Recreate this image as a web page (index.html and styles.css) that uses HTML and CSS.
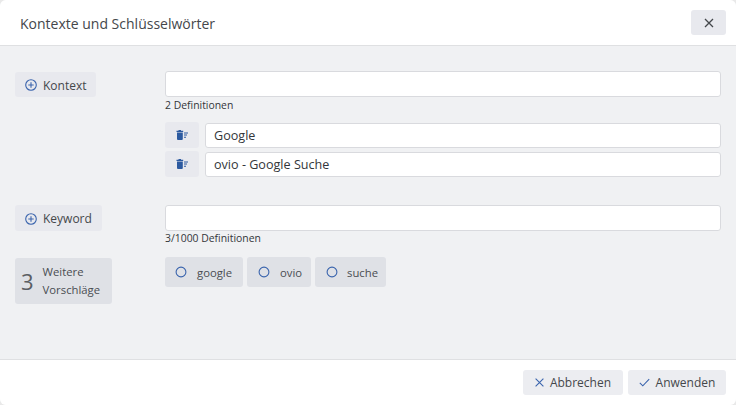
FILE: index.html
```html
<!DOCTYPE html>
<html lang="de">
<head>
<meta charset="utf-8">
<title>Kontexte und Schlüsselwörter</title>
<link rel="stylesheet" href="styles.css">
</head>
<body>
<div class="dialog">
  <header class="head">
    <h1 class="title">Kontexte und Schlüsselwörter</h1>
    <button class="btn close" aria-label="Schließen"><svg width="10" height="10" viewBox="0 0 10 10"><path d="M1 1l8 8M9 1l-8 8" class="st-dark"/></svg></button>
  </header>
  <main class="body">
    <section class="row row-context">
      <div class="left"><button class="btn add add-kontext"><svg width="12" height="12" viewBox="0 0 12 12"><circle cx="6" cy="6" r="5.300" class="st-blue"/><path d="M6 3.300v5.400M3.300 6h5.400" class="st-blue"/></svg>Kontext</button></div>
      <div class="right">
        <input class="field" type="text">
        <div class="hint">2 Definitionen</div>
        <div class="items">
          <div class="item">
            <button class="btn icon" aria-label="Löschen"><svg width="12" height="10" viewBox="0 0 12 10"><path d="M2.500 0h2.500v.8h2.200v1.200H.5V.8h2zM1 2.600h5.800v6.400q0 1-1 1H2q-1 0-1-1zM8 2.500h4v1H8zM8 4.600h3v1H8zM8 6.700h2v1H8z" class="fill-blue"/></svg></button>
            <input class="field small" type="text" value="Google">
          </div>
          <div class="item">
            <button class="btn icon" aria-label="Löschen"><svg width="12" height="10" viewBox="0 0 12 10"><path d="M2.500 0h2.500v.8h2.200v1.200H.5V.8h2zM1 2.600h5.800v6.400q0 1-1 1H2q-1 0-1-1zM8 2.500h4v1H8zM8 4.600h3v1H8zM8 6.700h2v1H8z" class="fill-blue"/></svg></button>
            <input class="field small" type="text" value="ovio - Google Suche">
          </div>
        </div>
      </div>
    </section>
    <section class="row row-keyword">
      <div class="left"><button class="btn add add-keyword"><svg width="12" height="12" viewBox="0 0 12 12"><circle cx="6" cy="6" r="5.300" class="st-blue"/><path d="M6 3.300v5.400M3.300 6h5.400" class="st-blue"/></svg>Keyword</button></div>
      <div class="right">
        <input class="field" type="text">
        <div class="hint">3/1000 Definitionen</div>
      </div>
    </section>
    <section class="row row-suggest">
      <div class="left">
        <div class="more"><span class="count">3</span><span class="more-text">Weitere<br>Vorschläge</span></div>
      </div>
      <div class="chips">
        <button class="chip chip-google"><svg width="12" height="12" viewBox="0 0 12 12"><circle cx="6" cy="6" r="4.900" class="st-blue"/></svg>google</button>
        <button class="chip chip-ovio"><svg width="12" height="12" viewBox="0 0 12 12"><circle cx="6" cy="6" r="4.900" class="st-blue"/></svg>ovio</button>
        <button class="chip chip-suche"><svg width="12" height="12" viewBox="0 0 12 12"><circle cx="6" cy="6" r="4.900" class="st-blue"/></svg>suche</button>
      </div>
    </section>
  </main>
  <footer class="foot">
    <button class="btn action cancel"><svg width="9" height="9" viewBox="0 0 9 9"><path d="M.6.600l7.800 7.800M8.400.600L.6 8.400" class="st-blue"/></svg>Abbrechen</button>
    <button class="btn action apply"><svg width="11" height="9" viewBox="0 0 11 9"><path d="M.8 4.800l3 3L10.200 1.200" class="st-blue"/></svg>Anwenden</button>
  </footer>
</div>
</body>
</html>
```

FILE: styles.css
```css
* { box-sizing: border-box; }
html, body { margin: 0; height: 100%; background: #e9e9e9; }
body { font-family: "Open Sans", "Noto Sans", sans-serif; color: #3c3f44; overflow: hidden; }
button, input { font: inherit; color: inherit; }
.dialog { width: 736px; height: 405px; display: flex; flex-direction: column; background: #f0f1f3; border-radius: 6px; overflow: hidden; }
.head { height: 46px; flex: none; display: flex; align-items: center; justify-content: space-between; padding: 0 10px 0 20px; background: #fff; border-bottom: 1px solid #dfe0e2; }
.title { margin: 2px 0 0; font-size: 14px; font-weight: 400; color: #44474b; }
.btn { display: inline-flex; align-items: center; justify-content: center; border: 0; padding: 0; background: #e8e9ee; border-radius: 3px; }
.close { width: 35px; height: 25px; }
.st-dark { fill: none; stroke: #44474b; stroke-width: 1.300; }
.st-blue { fill: none; stroke: #3a64ad; stroke-width: 1.100; }
.fill-blue { fill: #2c5aa0; }
.body { flex: 1; padding: 25px 15px 0; display: flex; flex-direction: column; }
.row { display: flex; }
.left { width: 150px; flex: none; }
.right { width: 556px; flex: none; }
.add { height: 25px; margin-top: 1px; gap: 6px; font-size: 12px; line-height: 25px; color: #44474b; justify-content: flex-start; padding: 1px 0 0 10px; }
.add-kontext { width: 81px; }
.add-keyword { width: 87px; height: 26px; margin-top: 0; }
.field { display: block; width: 100%; height: 26px; padding: 0 8px; background: #fff; border: 1px solid #d9dade; border-radius: 3px; outline: 0; font-size: 12.600px; color: #33363a; }
.hint { height: 17px; margin-top: 1px; font-size: 10.400px; line-height: 15px; color: #33363a; }
.row-keyword .hint { margin-top: 0; }
.items { display: flex; flex-direction: column; gap: 3px; margin-top: 7px; }
.item { display: flex; align-items: center; gap: 6px; }
.icon { width: 34px; height: 26px; flex: none; }
.small { height: 25px; flex: 1; min-width: 0; }
.row-keyword { margin-top: 28px; }
.row-suggest { margin-top: 10px; }
.more { width: 97px; height: 46px; display: flex; align-items: center; background: #dfe1e6; border-radius: 3px; padding-left: 6px; gap: 9px; }
.count { font-size: 22px; color: #5b5e63; }
.more-text { font-size: 11.300px; line-height: 18px; color: #4a4d52; }
.chips { display: flex; gap: 4px; align-items: flex-start; margin-top: -1px; }
.chip { display: inline-flex; align-items: center; justify-content: flex-start; height: 30px; padding: 0 0 0 11px; border: 0; background: #dfe1e6; border-radius: 3px; font-size: 11.300px; color: #4a4d52; gap: 10px; }
.chip-google { width: 78px; padding-left: 10px; }
.chip-ovio { width: 64px; }
.chip-suche { width: 71px; gap: 9px; }
.foot { height: 46px; flex: none; display: flex; justify-content: flex-end; align-items: center; gap: 5px; padding: 0 10px; background: #fff; border-top: 1px solid #dfe0e2; }
.action { height: 25px; gap: 6px; font-size: 12px; color: #44474b; background: #ecedf1; }
.cancel { width: 100px; }
.apply { width: 98px; }
```
